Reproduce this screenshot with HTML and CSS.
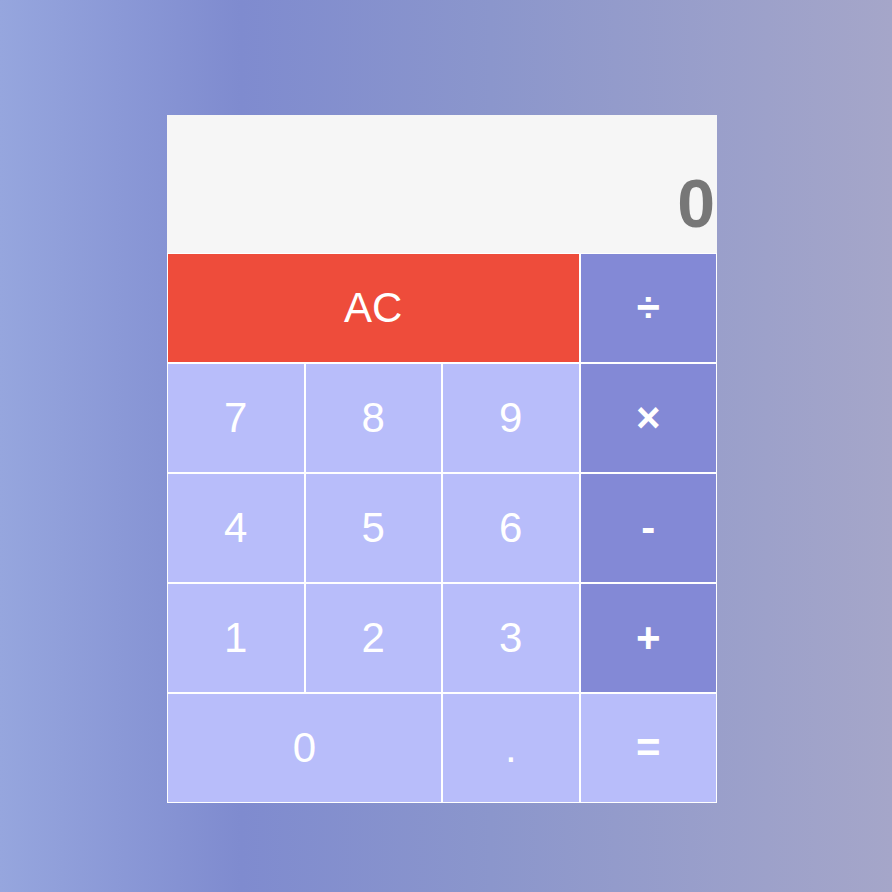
FILE: index.html
```html
<!DOCTYPE html>
<html>
<head>
<meta charset="utf-8">
<link rel="stylesheet" href="styles.css">
</head>
<body>
<div class="calc">
  <div class="display">0</div>
  <div class="keys">
    <div class="key ac span3">AC</div>
    <div class="key op">÷</div>
    <div class="key num">7</div>
    <div class="key num">8</div>
    <div class="key num">9</div>
    <div class="key op">×</div>
    <div class="key num">4</div>
    <div class="key num">5</div>
    <div class="key num">6</div>
    <div class="key op">-</div>
    <div class="key num">1</div>
    <div class="key num">2</div>
    <div class="key num">3</div>
    <div class="key op">+</div>
    <div class="key num span2">0</div>
    <div class="key num">.</div>
    <div class="key num eq">=</div>
  </div>
</div>
</body>
</html>
```

FILE: styles.css
```css
html, body {
  margin: 0;
  padding: 0;
  height: 100%;
}
body {
  background: linear-gradient(to right, #96a6de 0%, #7f8bcf 27%, #8b96cc 55%, #a5a6c9 100%);
  font-family: "Liberation Sans", Arial, sans-serif;
  padding-top: 115px;
  padding-left: 167px;
  box-sizing: border-box;
}
.calc {
  width: 550px;
  background: #ffffff;
}
.display {
  height: 138px;
  background: #f6f6f6;
  color: #777777;
  font-weight: bold;
  font-size: 68px;
  line-height: 1;
  display: flex;
  justify-content: flex-end;
  align-items: flex-end;
  padding: 0 2px 16px 0;
  box-sizing: border-box;
}
.keys {
  display: grid;
  grid-template-columns: repeat(4, 1fr);
  grid-auto-rows: 110px;
}
.key {
  border: 1px solid #ffffff;
  box-sizing: border-box;
  display: flex;
  align-items: center;
  justify-content: center;
  color: #ffffff;
  font-size: 42px;
}
.span3 { grid-column: span 3; }
.span2 { grid-column: span 2; }
.ac { background: #ee4c3b; }
.op { background: #8389d6; font-weight: bold; }
.num { background: #b8bdfa; }
.eq { font-weight: bold; }
```
